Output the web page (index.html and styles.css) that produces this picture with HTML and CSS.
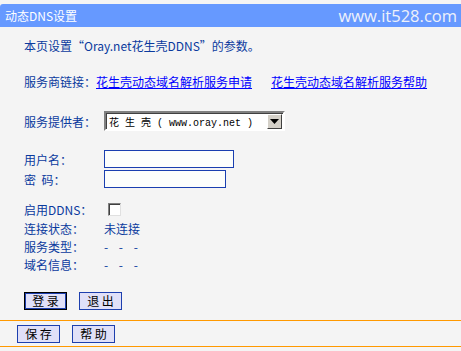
FILE: index.html
```html
<!DOCTYPE html>
<html>
	<head>
		<meta charset="UTF-8">
		<title>动态DNS设置</title>
		<link rel="stylesheet" href="styles.css">
	</head>
	<body>
		<div class="titleBar">
			<span class="title">动态DNS设置</span>
			<span class="mark">www.it528.com</span>
		</div>
		<div class="content">
			<p class="intro">本页设置“Oray.net花生壳DDNS”的参数。</p>
			<div class="row links">
				<span class="label">服务商链接：</span>
				<a href="#">花生壳动态域名解析服务申请</a>
				<a href="#" class="second">花生壳动态域名解析服务帮助</a>
			</div>
			<div class="row provider">
				<span class="label">服务提供者：</span>
				<span class="select">
					<span class="selText">花 生 壳 ( www.oray.net )</span>
					<span class="arrow"><svg width="9" height="5" viewBox="0 0 9 5"><path d="M0 0h9L4.5 5z" fill="#000"/></svg></span>
				</span>
			</div>
			<div class="group login">
				<div class="row">
					<span class="label">用户名：</span>
					<input type="text" class="txt user">
				</div>
				<div class="row">
					<span class="label">密&nbsp;&nbsp;码：</span>
					<input type="password" class="txt pass">
				</div>
			</div>
			<div class="group status">
				<div class="row">
					<span class="label">启用DDNS：</span>
					<span class="check"></span>
				</div>
				<div class="row">
					<span class="label">连接状态：</span>
					<span>未连接</span>
				</div>
				<div class="row">
					<span class="label">服务类型：</span>
					<span class="dash">- - -</span>
				</div>
				<div class="row">
					<span class="label">域名信息：</span>
					<span class="dash">- - -</span>
				</div>
			</div>
			<div class="buttons">
				<button class="btn focus">登 录</button>
				<button class="btn">退 出</button>
			</div>
		</div>
		<div class="footer">
			<button class="btn">保 存</button>
			<button class="btn">帮 助</button>
		</div>
	</body>
</html>
```
FILE: styles.css
```css
body{
	margin: 0;
	padding: 0;
	background: #f4f4f4;
	font-family: "Noto Sans CJK SC", "DejaVu Sans", sans-serif;
	font-size: 12px;
	color: #0a3a9e;
	width: 461px;
	height: 351px;
	overflow: hidden;
}
.titleBar{
	margin-top: 4px;
	height: 23px;
	background: #6699ff;
	border-top-left-radius: 3px;
	display: flex;
	align-items: center;
	justify-content: space-between;
	padding: 0 4px 0 5px;
}
.title{
	color: #fff;
	font-size: 12px;
}
.mark{
	color: #eef1fa;
	font-family: "Open Sans", "DejaVu Sans", sans-serif;
	font-size: 16.5px;
	line-height: 23px;
}
.content{
	padding-left: 24px;
}
.intro{
	margin: 10px 0 0 0;
	line-height: 18px;
}
.row{
	display: flex;
	align-items: center;
	height: 18px;
}
.label{
	width: 80px;
	flex: none;
}
.links{
	margin-top: 17px;
}
.links .label{
	width: 72px;
}
a{
	color: #0000ff;
	text-decoration: underline;
}
.links .second{
	margin-left: 19px;
}
.provider{
	margin-top: 21px;
	height: 20px;
}
.select{
	display: flex;
	align-items: center;
	width: 177px;
	height: 16px;
	border: 2px solid;
	border-color: #808080 #fff #fff #808080;
	background: #fff;
	box-shadow: inset 1px 1px 0 #404040;
	justify-content: space-between;
	overflow: hidden;
}
.selText{
	color: #000;
	font-family: "Liberation Mono", "Noto Sans CJK SC", monospace;
	font-size: 10px;
	padding-left: 3px;
	white-space: pre;
	overflow: hidden;
	flex: 1;
}
.arrow{
	flex: none;
	width: 15px;
	height: 15px;
	background: #d4d0c8;
	border: 1px solid;
	border-color: #fff #404040 #404040 #fff;
	box-sizing: border-box;
	display: flex;
	align-items: center;
	justify-content: center;
	margin-right: 1px;
}
.group{
	display: flex;
	flex-direction: column;
}
.login{
	margin-top: 19px;
	gap: 2px;
}
.txt{
	margin: 0;
	padding: 0;
	height: 18px;
	box-sizing: border-box;
	border: 1px solid #1a3fb0;
	background: #fcfefc;
	outline: none;
}
.user{
	width: 130px;
}
.pass{
	width: 122px;
}
.status{
	margin-top: 12px;
	gap: 1px;
}
.status .row + .row + .row{
	margin-top: -1px;
}
.check{
	width: 13px;
	height: 13px;
	margin-left: 4px;
	box-sizing: border-box;
	border: 1px solid;
	border-color: #808080 #e0e0e0 #e0e0e0 #808080;
	box-shadow: inset 1px 1px 0 #404040;
	background: #fff;
}
.dash{
	letter-spacing: 4px;
}
.buttons{
	margin-top: 19px;
	display: flex;
	gap: 12px;
	height: 28px;
}
.btn{
	margin: 0;
	padding: 0;
	width: 43px;
	height: 18px;
	box-sizing: border-box;
	border: 1px solid #1d3fae;
	background: #e0e0f8;
	color: #000;
	font-family: "Noto Sans CJK SC", sans-serif;
	font-size: 12px;
	line-height: 14px;
}
.btn.focus{
	border: 1px solid #000;
	box-shadow: inset 0 0 0 1px #1d3fae;
}
.footer{
	border-top: 1px solid #ff9900;
	border-bottom: 1px solid #ff9900;
	height: 25px;
	box-sizing: content-box;
	padding-left: 17px;
	display: flex;
	align-items: center;
	gap: 12px;
}
```
